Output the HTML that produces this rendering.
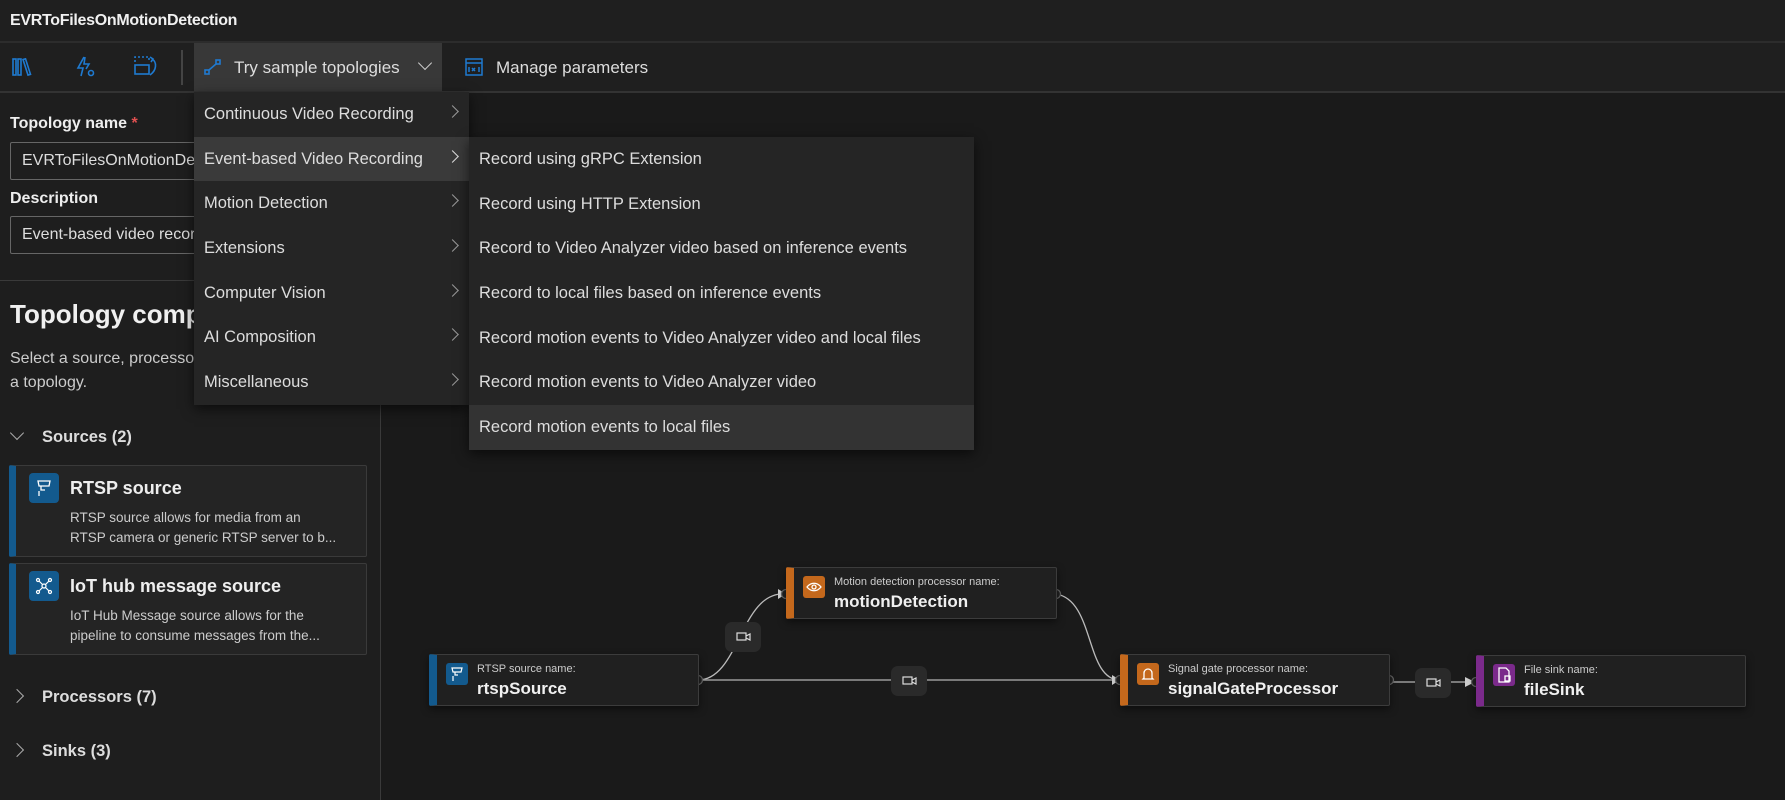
<!DOCTYPE html>
<html><head><meta charset="utf-8"><style>
*{box-sizing:border-box;margin:0;padding:0}
body{width:1785px;height:800px;background:#1a1a1a;font-family:"Liberation Sans",sans-serif;color:#e0e0e0;position:relative;overflow:hidden}
.abs{position:absolute}
#title{left:0;top:0;width:1785px;height:43px;background:#1f1f1f;border-bottom:2px solid #2c2c2c;font-size:16px;font-weight:bold;padding:12px 0 0 10px;color:#f0f0f0;letter-spacing:-0.3px}
#tb{left:0;top:43px;width:1785px;height:50px;background:#1f1f1f;border-bottom:2px solid #333}
#left{left:0;top:93px;width:381px;height:707px;background:#1e1e1e;border-right:1px solid #3a3a3a}
.lbl{font-size:16px;font-weight:bold;color:#eee}
.inp{border:1px solid #666;border-radius:2px;height:38px;font-size:16px;color:#ddd;padding:9px 0 0 11px;background:#1e1e1e;white-space:nowrap;overflow:hidden}
.menu{background:#252525;box-shadow:0 4px 12px rgba(0,0,0,.6)}
.mi{height:44.7px;font-size:16.5px;color:#ddd;padding:13px 0 0 10px;position:relative;white-space:nowrap}
.mi .ch{position:absolute;right:12px;top:15px;width:9px;height:9px;border-right:1.3px solid #999;border-top:1.3px solid #999;transform:rotate(45deg)}
.card{left:9px;width:358px;height:92px;background:#242424;border:1px solid #3a3a3a;border-left:7px solid #135a8e;border-radius:2px}
.card .ic{position:absolute;left:13px;top:7px;width:30px;height:30px;background:#135a8e;border-radius:4px}
.card .t{position:absolute;left:54px;top:12px;font-size:18px;font-weight:bold;color:#eee;white-space:nowrap}
.card .d{position:absolute;left:54px;top:42px;font-size:13.5px;line-height:20px;color:#ccc;white-space:nowrap}
.sec{left:12px;font-size:16.5px;font-weight:bold;color:#ddd}
.node{background:#202020;border:1px solid #3c3c3c;border-left:8px solid;border-radius:2px;box-shadow:0 3px 8px rgba(0,0,0,.5);height:52px}
.node .ic{position:absolute;left:9px;top:8px;width:22px;height:22px;border-radius:3px}
.node .s{position:absolute;left:40px;top:8px;font-size:11px;color:#ccc}
.node .n{position:absolute;left:40px;top:24px;font-size:17px;font-weight:bold;color:#f0f0f0}
</style></head><body>
<div id="title" class="abs">EVRToFilesOnMotionDetection</div>
<div id="tb" class="abs">
 <svg class="abs" style="left:12px;top:15px" width="20" height="18" viewBox="0 0 20 18" fill="none" stroke="#1f7ad0" stroke-width="1.6"><rect x="1" y="1" width="3" height="16"/><rect x="6" y="1" width="3" height="16"/><path d="M11 1.5l2.5-.7 5 15.5-2.5.8z"/></svg>
 <svg class="abs" style="left:76px;top:13px" width="20" height="22" viewBox="0 0 20 22" fill="none" stroke="#1f7ad0" stroke-width="1.6"><path d="M8 1L2 12h5l-2 8"/><path d="M9 1l-1 7h5l-3 5"/><circle cx="15" cy="17" r="2.5"/></svg>
 <svg class="abs" style="left:134px;top:12px" width="26" height="24" viewBox="0 0 26 24" fill="none" stroke="#1f7ad0" stroke-width="1.6"><rect x="1" y="10" width="14" height="9"/><path d="M1 7V2h14v5" stroke-dasharray="2 2"/><path d="M18 4c5 3 5 11 -2 16"/><path d="M16 2l3 2-2 3"/></svg>
 <div class="abs" style="left:181px;top:7px;width:2px;height:35px;background:#444"></div>
 <div class="abs" style="left:194px;top:0;width:248px;height:48px;background:#383838"></div>
 <svg class="abs" style="left:204px;top:15px" width="18" height="18" viewBox="0 0 18 18" fill="none" stroke="#1f7ad0" stroke-width="1.6"><rect x="1" y="12" width="4" height="4"/><rect x="12" y="2" width="4" height="4"/><path d="M5 12l7-6"/></svg>
 <div class="abs" style="left:234px;top:15px;font-size:17px;color:#ddd">Try sample topologies</div>
 <div class="abs" style="left:420px;top:15px;width:10px;height:10px;border-right:1.5px solid #ccc;border-bottom:1.5px solid #ccc;transform:rotate(45deg)"></div>
 <svg class="abs" style="left:465px;top:15px" width="18" height="18" viewBox="0 0 18 18" fill="none" stroke="#1f7ad0" stroke-width="1.5"><rect x="1" y="1" width="16" height="16"/><path d="M1 5h16"/><path d="M4 9v5M14 9v5M7 10l3 3M10 10l-3 3"/></svg>
 <div class="abs" style="left:496px;top:15px;font-size:17px;color:#ddd">Manage parameters</div>
</div>
<div id="left" class="abs">
 <div class="abs lbl" style="left:10px;top:22px">Topology name <span style="color:#e05050">*</span></div>
 <div class="abs inp" style="left:10px;top:49px;width:380px">EVRToFilesOnMotionDetection</div>
 <div class="abs lbl" style="left:10px;top:97px">Description</div>
 <div class="abs inp" style="left:10px;top:123px;width:380px">Event-based video recording</div>
 <div class="abs" style="left:0;top:187px;width:381px;height:1px;background:#3a3a3a"></div>
 <div class="abs" style="left:10px;top:206px;font-size:26px;font-weight:bold;color:#f0f0f0;white-space:nowrap">Topology components</div>
 <div class="abs" style="left:10px;top:254px;font-size:16px;line-height:24px;color:#ccc;width:370px;white-space:nowrap">Select a source, processor or sink to add to<br>a topology.</div>
 <div class="abs sec" style="top:335px"><span style="display:inline-block;width:10px;height:10px;border-right:1.3px solid #aaa;border-bottom:1.3px solid #aaa;transform:rotate(45deg);margin:0 6px 4px 0"></span><span style="margin-left:14px">Sources (2)</span></div>
 <div class="abs card" style="top:372px"><div class="ic"><svg width="30" height="30" viewBox="0 0 30 30" fill="none" stroke="#fff" stroke-width="1.3"><path d="M9 8h12l-1 5H10z"/><path d="M12 13v4h4M10 18v5"/></svg></div><div class="t">RTSP source</div><div class="d">RTSP source allows for media from an<br>RTSP camera or generic RTSP server to b...</div></div>
 <div class="abs card" style="top:470px"><div class="ic"><svg width="30" height="30" viewBox="0 0 30 30" fill="none" stroke="#fff" stroke-width="1.2"><circle cx="15" cy="15" r="2"/><circle cx="9" cy="9" r="1.5"/><circle cx="21" cy="9" r="1.5"/><circle cx="9" cy="21" r="1.5"/><circle cx="21" cy="21" r="1.5"/><path d="M10 10l4 4M20 10l-4 4M10 20l4-4M20 20l-4-4"/></svg></div><div class="t">IoT hub message source</div><div class="d">IoT Hub Message source allows for the<br>pipeline to consume messages from the...</div></div>
 <div class="abs sec" style="top:595px"><span style="display:inline-block;width:10px;height:10px;border-right:1.3px solid #aaa;border-top:1.3px solid #aaa;transform:rotate(45deg);margin:0 6px 1px 0"></span><span style="margin-left:14px">Processors (7)</span></div>
 <div class="abs sec" style="top:649px"><span style="display:inline-block;width:10px;height:10px;border-right:1.3px solid #aaa;border-top:1.3px solid #aaa;transform:rotate(45deg);margin:0 6px 1px 0"></span><span style="margin-left:14px">Sinks (3)</span></div>
</div>

<svg class="abs" style="left:0;top:0" width="1785" height="800" fill="none">
 <path d="M698 680 C 740 680, 740 590, 786 594" stroke="#bbb" stroke-width="1.3"/>
 <path d="M1056 594 C 1095 600, 1085 680, 1120 680" stroke="#bbb" stroke-width="1.3"/>
 <path d="M698 680 H1120" stroke="#999" stroke-width="1.6"/>
 <path d="M1389 682 H1476" stroke="#999" stroke-width="1.6"/>
 <path d="M778 589l8 5-8 5zM1112 675l8 5-8 5zM1465 677l10 5-10 5z" fill="#ccc" stroke="none"/>
 <rect x="725" y="622" width="36" height="30" rx="7" fill="#2a2a2a"/>
 <rect x="891" y="666" width="36" height="30" rx="7" fill="#2a2a2a"/>
 <rect x="1415" y="668" width="36" height="30" rx="7" fill="#2a2a2a"/>
 <g stroke="#ddd" stroke-width="1.2"><rect x="737" y="633" width="9" height="7"/><path d="M746 636l4-2v6l-4-2"/><rect x="903" y="677" width="9" height="7"/><path d="M912 680l4-2v6l-4-2"/><rect x="1427" y="679" width="9" height="7"/><path d="M1436 682l4-2v6l-4-2"/></g>
 <g fill="#222" stroke="#666" stroke-width="1.3"><circle cx="698" cy="680" r="4.5"/><circle cx="786" cy="594" r="4.5"/><circle cx="1056" cy="594" r="4.5"/><circle cx="1120" cy="680" r="4.5"/><circle cx="1389" cy="680" r="4.5"/><circle cx="1476" cy="682" r="4.5"/></g>
</svg>

<div class="abs node" style="left:429px;top:654px;width:270px;border-left-color:#135a8e"><div class="ic" style="background:#135a8e"><svg width="22" height="22" viewBox="0 0 22 22" fill="none" stroke="#fff" stroke-width="1.2"><path d="M6 5h10l-1 4H7z"/><path d="M9 9v3h3M7 13v5"/></svg></div><div class="s">RTSP source name:</div><div class="n">rtspSource</div></div>
<div class="abs node" style="left:786px;top:567px;width:271px;border-left-color:#c4681c"><div class="ic" style="background:#c4681c"><svg width="22" height="22" viewBox="0 0 22 22" fill="none" stroke="#fff" stroke-width="1.3"><path d="M4 11c4-5 10-5 14 0c-4 5-10 5-14 0z"/><circle cx="11" cy="11" r="2"/></svg></div><div class="s">Motion detection processor name:</div><div class="n">motionDetection</div></div>
<div class="abs node" style="left:1120px;top:654px;width:270px;border-left-color:#c4681c"><div class="ic" style="background:#c4681c"><svg width="22" height="22" viewBox="0 0 22 22" fill="none" stroke="#fff" stroke-width="1.3"><path d="M7 15V10a4 4 0 0 1 8 0v5l1 1H6z"/></svg></div><div class="s">Signal gate processor name:</div><div class="n">signalGateProcessor</div></div>
<div class="abs node" style="left:1476px;top:655px;width:270px;border-left-color:#7b2a8b"><div class="ic" style="background:#7b2a8b"><svg width="22" height="22" viewBox="0 0 22 22" fill="none" stroke="#fff" stroke-width="1.3"><path d="M6 4h7l3 3v11H6z"/><rect x="12" y="12" width="5" height="5"/></svg></div><div class="s">File sink name:</div><div class="n">fileSink</div></div>

<div class="abs menu" style="left:194px;top:92px;width:275px;height:313px">
 <div class="mi">Continuous Video Recording<i class="ch"></i></div>
 <div class="mi" style="background:#3a3a3a">Event-based Video Recording<i class="ch" style="border-color:#ddd"></i></div>
 <div class="mi">Motion Detection<i class="ch"></i></div>
 <div class="mi">Extensions<i class="ch"></i></div>
 <div class="mi">Computer Vision<i class="ch"></i></div>
 <div class="mi">AI Composition<i class="ch"></i></div>
 <div class="mi">Miscellaneous<i class="ch"></i></div>
</div>
<div class="abs menu" style="left:469px;top:137px;width:505px;height:313px">
 <div class="mi">Record using gRPC Extension</div>
 <div class="mi">Record using HTTP Extension</div>
 <div class="mi">Record to Video Analyzer video based on inference events</div>
 <div class="mi">Record to local files based on inference events</div>
 <div class="mi">Record motion events to Video Analyzer video and local files</div>
 <div class="mi">Record motion events to Video Analyzer video</div>
 <div class="mi" style="background:#333">Record motion events to local files</div>
</div>
</body></html>
